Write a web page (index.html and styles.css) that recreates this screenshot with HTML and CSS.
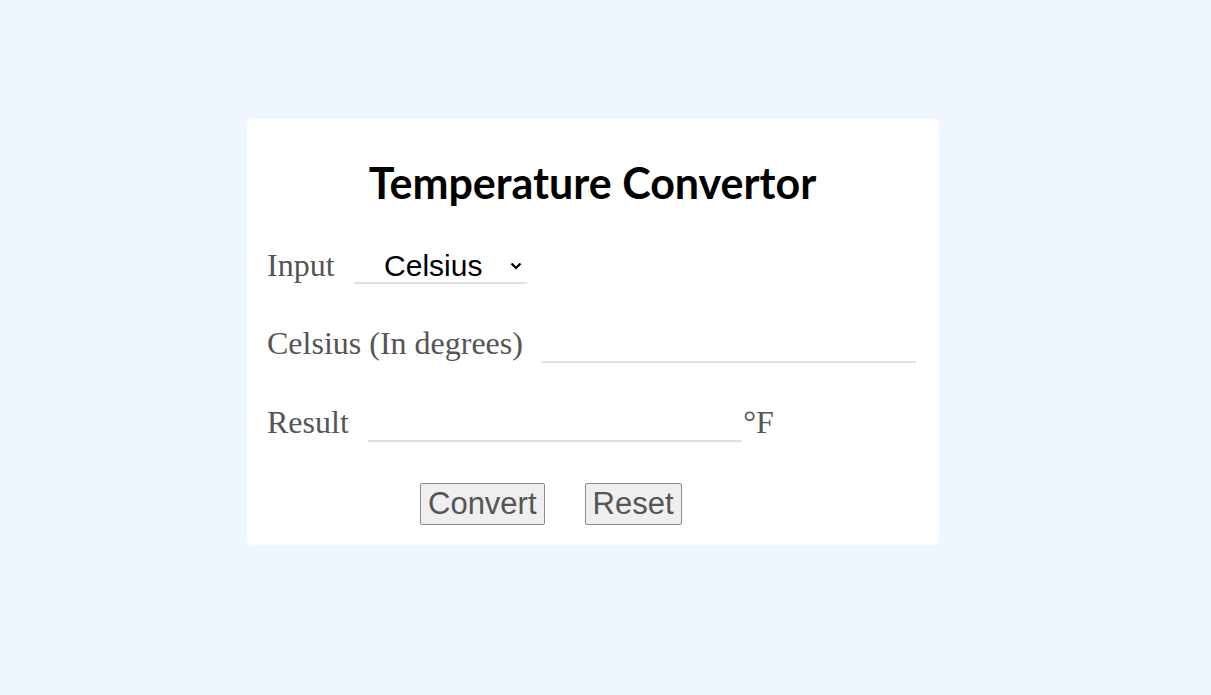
FILE: index.html
```html
<!DOCTYPE html>
<html>
<head>
<meta charset="utf-8">
<title>Temperature Convertor</title>
<link rel="stylesheet" href="styles.css">
</head>
<body>
<main class="card">
  <h1 class="title">Temperature Convertor</h1>
  <div class="row row-first">
    <label class="label" for="unit">Input</label>
    <span class="select-wrap">
      <select id="unit" class="select">
        <option>Celsius</option>
        <option>Fahrenheit</option>
      </select>
      <svg class="chev" width="12" height="8" viewBox="0 0 12 8"><path d="M1.5 1.5 L6 6 L10.5 1.5" fill="none" stroke="#000" stroke-width="2.2"/></svg>
    </span>
  </div>
  <div class="row">
    <label class="label" for="val">Celsius (In degrees)</label>
    <input id="val" class="field" type="text">
  </div>
  <div class="row">
    <label class="label" for="res">Result</label>
    <input id="res" class="field" type="text" readonly>
    <span class="unit">°F</span>
  </div>
  <div class="actions">
    <button class="btn">Convert</button>
    <button class="btn">Reset</button>
  </div>
</main>
</body>
</html>
```
FILE: styles.css
```css
html, body {
  margin: 0;
  padding: 0;
}
body {
  background: #eff6ff;
  min-height: 695px;
  padding-top: 119px;
  box-sizing: border-box;
}
.card {
  width: 692px;
  box-sizing: border-box;
  margin-left: 247px;
  background: #ffffff;
  border-radius: 6px;
  padding: 20px 21px 20px 20px;
}
.title {
  margin: 18px 0 0 0;
  font-family: Lato, "Open Sans", sans-serif;
  font-weight: 700;
  font-size: 43px;
  line-height: 51px;
  text-align: center;
  color: #000;
}
.row {
  display: flex;
  align-items: baseline;
  gap: 19.5px;
  margin-top: 41px;
}
.row-first {
  margin-top: 39px;
}
.label, .unit {
  font-family: "Liberation Serif", "Times New Roman", serif;
  font-size: 32px;
  color: #555;
}
.unit {
  margin-left: -18.5px;
}
.select-wrap {
  display: inline-flex;
  align-items: center;
  width: 173px;
  box-sizing: border-box;
  border-bottom: 2px solid #e0e0e0;
  padding-right: 5px;
}
.select {
  appearance: none;
  -webkit-appearance: none;
  border: none;
  background: transparent;
  font-family: "Liberation Sans", Arial, sans-serif;
  font-size: 30px;
  color: #000;
  padding: 0 0 0 30px;
  flex: 1;
  min-width: 0;
  outline: none;
}
.chev {
  flex: none;
}
.field {
  width: 374px;
  box-sizing: border-box;
  border: none;
  border-bottom: 2px solid #e0e0e0;
  font-family: "Liberation Sans", Arial, sans-serif;
  font-size: 30px;
  padding: 0;
  outline: none;
  background: transparent;
}
.actions {
  display: flex;
  gap: 40px;
  padding-left: 153px;
  margin-top: 41px;
}
.btn {
  font-family: "Liberation Sans", Arial, sans-serif;
  font-size: 31px;
  color: #555;
  background: #efefef;
  border: 1px solid #8a8a8a;
  border-radius: 2px;
  padding: 2px 7px;
  line-height: normal;
}
```
